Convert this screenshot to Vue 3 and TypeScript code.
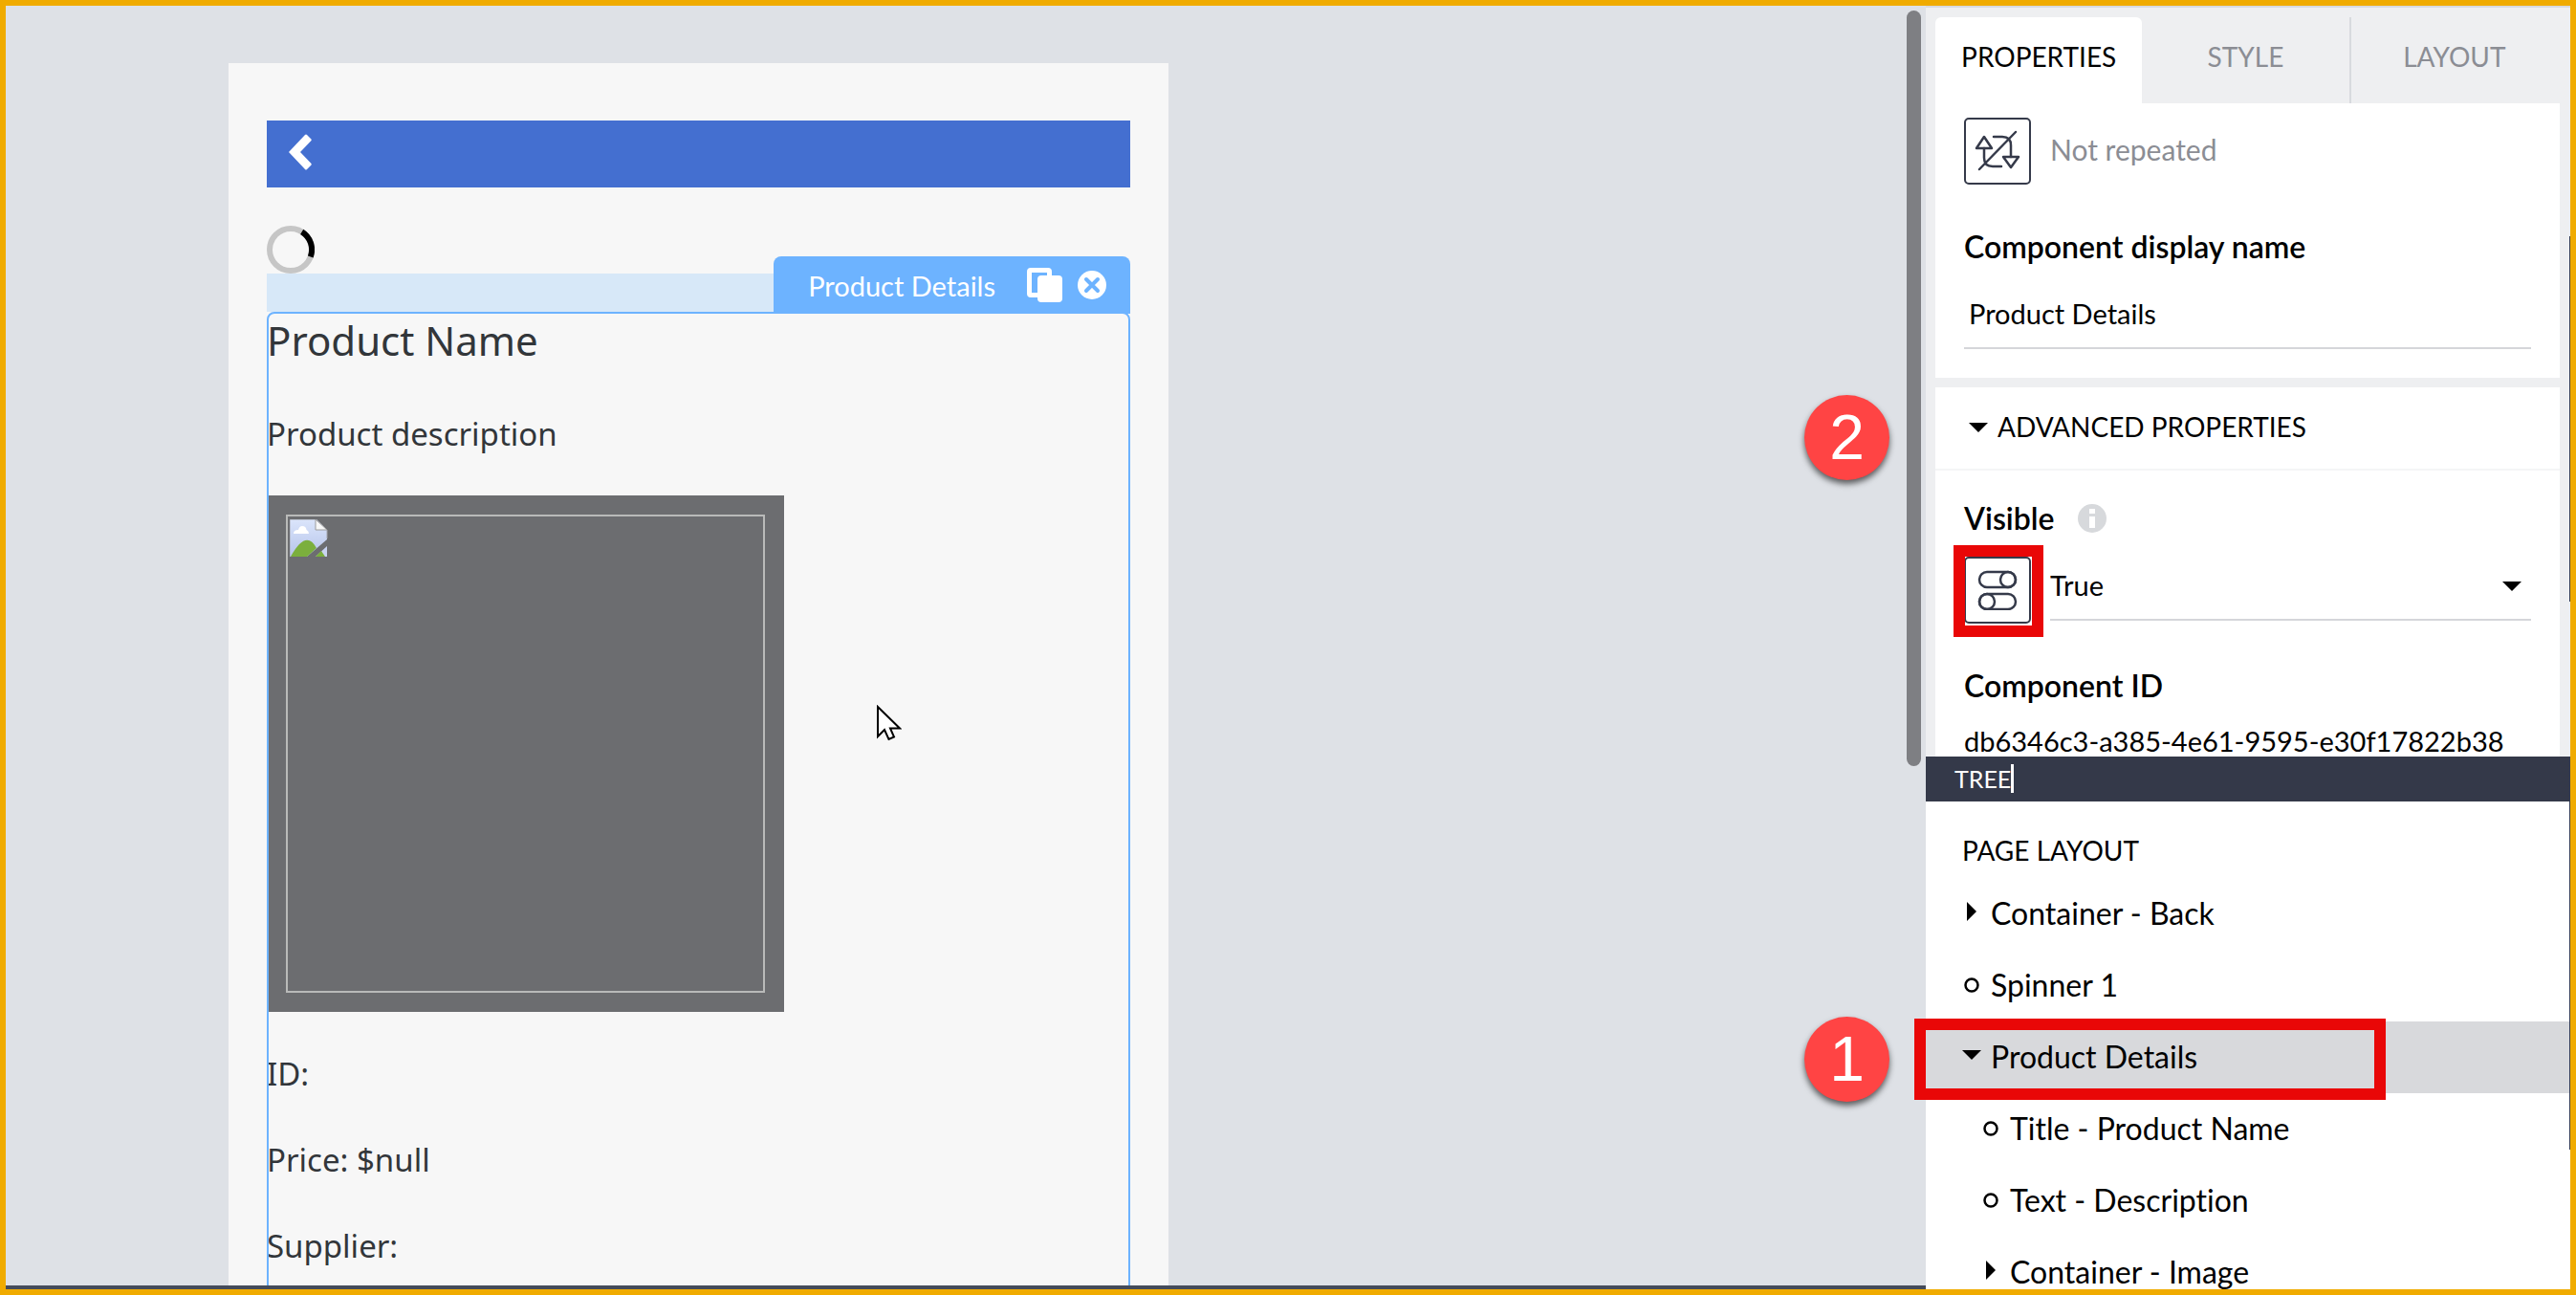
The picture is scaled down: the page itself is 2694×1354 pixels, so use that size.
<script setup lang="ts">
import { ref } from 'vue'

type NodeKind = 'closed' | 'open' | 'leaf'

interface TreeNode {
  label: string
  kind: NodeKind
  level: number
}

const tabs = ['PROPERTIES', 'STYLE', 'LAYOUT']
const activeTab = ref('PROPERTIES')
const displayName = ref('Product Details')
const visible = ref('True')
const selected = ref('Product Details')

const fields = ['ID:', 'Price: $null', 'Supplier:']

const nodes: TreeNode[] = [
  { label: 'Container - Back', kind: 'closed', level: 0 },
  { label: 'Spinner 1', kind: 'leaf', level: 0 },
  { label: 'Product Details', kind: 'open', level: 0 },
  { label: 'Title - Product Name', kind: 'leaf', level: 1 },
  { label: 'Text - Description', kind: 'leaf', level: 1 },
  { label: 'Container - Image', kind: 'closed', level: 1 },
]
</script>

<template>
  <div class="editor">
    <main class="canvas">
      <section class="phone">
        <header class="appbar">
          <button class="back" type="button" aria-label="Back">
            <svg width="24" height="38" viewBox="0 0 24 38">
              <path d="M0 19 L17 1 Q18 0 19 1 L23.500 5.500 Q24 6 23.500 7 L12 19 L23.500 31 Q24 32 23.500 32.500 L19 37 Q18 38 17 37 Z" fill="#fff" />
            </svg>
          </button>
        </header>
        <svg class="spinner" width="50" height="50" viewBox="0 0 50 50" aria-label="Loading">
          <circle cx="25" cy="25" r="22" fill="none" stroke="#c6c6c6" stroke-width="6" />
          <path d="M36.700 6.400 A22 22 0 0 1 45.800 32.500" fill="none" stroke="#000" stroke-width="6" />
        </svg>
        <div class="dropzone">
          <div class="handle">
            <span class="handle-name">Product Details</span>
            <button type="button" aria-label="Duplicate">
              <svg width="37" height="36" viewBox="0 0 37 36">
                <path d="M4 0 H22 Q26 0 26 4 V8 H21 V5 H5 V26 H11 V31 H4 Q0 31 0 27 V4 Q0 0 4 0 Z" fill="#fff" />
                <rect x="11" y="8" width="26" height="28" rx="4" fill="#fff" />
              </svg>
            </button>
            <button type="button" aria-label="Remove">
              <svg width="30" height="30" viewBox="0 0 30 30">
                <circle cx="15" cy="15" r="15" fill="#fff" />
                <path d="M9 9 L21 21 M21 9 L9 21" stroke="#6db3ff" stroke-width="4" stroke-linecap="round" />
              </svg>
            </button>
          </div>
        </div>
        <article class="selection">
          <h1>Product Name</h1>
          <p class="description">Product description</p>
          <div class="picture">
            <div class="picture-frame">
              <svg width="40" height="40" viewBox="0 0 40 40" aria-label="Missing picture">
                <defs>
                  <linearGradient id="sky" x1="0" y1="0" x2="0" y2="1">
                    <stop offset="0" stop-color="#dbe5fb" />
                    <stop offset="1" stop-color="#b6c4ea" />
                  </linearGradient>
                </defs>
                <path d="M0 0 H28 L39 11 V21 L18 39 H0 Z" fill="url(#sky)" />
                <path d="M39 28 V39 H27 Z" fill="#c9d4f1" />
                <path d="M4 15 Q4 11 9 11 Q10 7 13 7 Q17 7 17.500 11 Q20 12 20 15 Z" fill="#fff" />
                <path d="M1 39 Q17 10 28 30 L18 39 Z" fill="#7baf3d" />
                <path d="M33 33 L37 39 H27 Z" fill="#7baf3d" />
                <path d="M27 0 L39 11 H27 Z" fill="#f7f7f7" stroke="#9c9c9c" stroke-width="1" />
                <path d="M27 0 H0 V39 M39 11 V20" fill="none" stroke="#a5a8ae" stroke-width="1" />
              </svg>
            </div>
          </div>
          <p v-for="field in fields" :key="field" class="field">{{ field }}</p>
        </article>
      </section>
      <div class="scrollbar"></div>
    </main>

    <aside class="side">
      <section class="properties">
        <nav class="tabs">
          <button
            v-for="tab in tabs"
            :key="tab"
            type="button"
            :class="{ active: tab === activeTab }"
            @click="activeTab = tab"
          >{{ tab }}</button>
        </nav>

        <div class="card basic">
          <div class="repeat">
            <button class="icon-button" type="button" aria-label="Repeat with">
              <svg width="48" height="44" viewBox="0 0 48 44" fill="none" stroke="#353a4a" stroke-width="2.500" stroke-linecap="round" stroke-linejoin="round">
                <path d="M10 7 L18 19 H2 Z M38 39 L30 28 H46 Z" />
                <path d="M10 19 V29 Q10 38 19 38 H28 M20 7 H29 Q38 7 38 16 V28" />
                <path d="M43 2 L5 41" />
              </svg>
            </button>
            <span>Not repeated</span>
          </div>
          <label class="title" for="display-name">Component display name</label>
          <input id="display-name" v-model="displayName" class="text-input" type="text" />
        </div>

        <div class="card advanced">
          <button class="section-toggle" type="button">
            <svg width="20" height="10" viewBox="0 0 20 10"><path d="M0 0 H20 L10 10 Z" /></svg>
            <span>ADVANCED PROPERTIES</span>
          </button>
          <div class="advanced-body">
            <div class="visible-title">
              <label class="title" for="visible">Visible</label>
              <svg width="30" height="30" viewBox="0 0 30 30" aria-label="Info">
                <circle cx="15" cy="15" r="15" fill="#d7d9dc" />
                <path d="M12 5 H18 V10 H12 Z M12 13 H18 V25 H12 Z" fill="#fff" />
              </svg>
            </div>
            <div class="visible-row">
              <button class="icon-button" type="button" aria-label="Binding type">
                <svg width="42" height="42" viewBox="0 0 42 42" fill="none" stroke="#353a4a" stroke-width="2.500">
                  <rect x="2" y="2" width="38" height="16" rx="8" />
                  <circle cx="32" cy="10" r="8" />
                  <rect x="2" y="25" width="38" height="16" rx="8" />
                  <circle cx="10" cy="33" r="8" />
                </svg>
              </button>
              <div class="select-wrap">
                <select id="visible" v-model="visible">
                  <option>True</option>
                  <option>False</option>
                </select>
                <svg class="select-arrow" width="20" height="10" viewBox="0 0 20 10"><path d="M0 0 H20 L10 10 Z" /></svg>
              </div>
            </div>
            <div class="title">Component ID</div>
            <div class="component-id">db6346c3-a385-4e61-9595-e30f17822b38</div>
          </div>
        </div>
      </section>

      <h2 class="tree-head">TREE<span class="caret"></span></h2>

      <section class="tree">
        <h3>PAGE LAYOUT</h3>
        <ul>
          <li v-for="node in nodes" :key="node.label">
            <button
              type="button"
              :class="['node', 'level-' + node.level, { selected: node.label === selected }]"
              @click="selected = node.label"
            >
              <svg v-if="node.kind === 'closed'" width="20" height="20" viewBox="0 0 20 20"><path d="M5 0 L15 10 L5 20 Z" /></svg>
              <svg v-else-if="node.kind === 'open'" width="20" height="20" viewBox="0 0 20 20"><path d="M0 5 H20 L10 15 Z" /></svg>
              <svg v-else width="20" height="20" viewBox="0 0 20 20"><circle cx="10" cy="12" r="6.500" fill="none" stroke="#000" stroke-width="2.500" /></svg>
              <span>{{ node.label }}</span>
            </button>
          </li>
        </ul>
      </section>
    </aside>

    <div class="edge edge-top"></div>
    <div class="edge edge-bottom"></div>
    <div class="mark mark-visible"></div>
    <div class="mark mark-node"></div>
    <div class="badge badge-two">2</div>
    <div class="badge badge-one">1</div>
    <svg class="pointer" width="26" height="38" viewBox="0 0 26 38">
      <path d="M1 2 V33 L8 26 L12.500 36 L18 33.500 L14 24.500 H24 Z" fill="#fff" stroke="#000" stroke-width="2" />
    </svg>
  </div>
</template>

<style>
body {
  margin: 0;
}
</style>

<style scoped>
.editor {
  position: relative;
  display: flex;
  box-sizing: border-box;
  height: 100vh;
  overflow: hidden;
  border: 6px solid #f0ab00;
  color: #000;
  font-family: Lato, "Open Sans", sans-serif;
  font-size: 29px;
  font-variant-ligatures: none;
}

button,
input,
select {
  margin: 0;
  padding: 0;
  border: 0;
  background: none;
  color: inherit;
  font: inherit;
}

h1,
h2,
h3,
p,
ul {
  margin: 0;
  padding: 0;
  font-weight: 400;
  list-style: none;
}

svg {
  display: block;
  flex: none;
}

.canvas {
  position: relative;
  flex: 1;
  box-sizing: border-box;
  overflow: hidden;
  padding: 60px 0 0 233px;
  border-bottom: 4px solid #444b5a;
  background: #dee1e6;
}

.phone {
  box-sizing: border-box;
  width: 983px;
  min-height: 100%;
  padding: 60px 40px 0;
  background: #f7f7f7;
}

.appbar {
  display: flex;
  align-items: center;
  height: 70px;
  padding-left: 23px;
  background: #446fd0;
}

.back {
  padding-bottom: 4px;
}

.spinner {
  margin-top: 40px;
}

.dropzone {
  position: relative;
  height: 40px;
  background: #d7e8f8;
}

.handle {
  position: absolute;
  z-index: 1;
  right: 0;
  bottom: -2px;
  display: flex;
  align-items: center;
  box-sizing: border-box;
  height: 60px;
  padding: 0 25px 0 36px;
  border-radius: 8px 8px 0 0;
  background: #6db3ff;
  color: #fff;
}

.handle-name {
  margin-right: 33px;
}

.handle button + button {
  margin-left: 16px;
}

.selection {
  position: relative;
  height: 1100px;
  padding-top: 2px;
  color: #32363a;
  font-family: "Noto Sans", "Open Sans", sans-serif;
}

.selection::after {
  position: absolute;
  inset: 0;
  border: 2px solid #6db3ff;
  border-radius: 8px;
  content: "";
  pointer-events: none;
}

.selection h1 {
  font-size: 42px;
  line-height: 56px;
}

.description,
.field {
  font-size: 33px;
  line-height: 40px;
}

.description {
  margin-top: 50px;
}

.picture {
  box-sizing: border-box;
  width: 541px;
  margin: 44px 0 45px;
  padding: 20px;
  background: #6c6d70;
}

.picture-frame {
  box-sizing: border-box;
  height: 500px;
  padding: 3px 2px;
  border: 2px solid #b9bab9;
}

.field + .field {
  margin-top: 50px;
}

.scrollbar {
  position: absolute;
  top: 5px;
  right: 5px;
  width: 15px;
  height: 790px;
  border-radius: 8px;
  background: #7e7f83;
}

.side {
  display: flex;
  flex: none;
  flex-direction: column;
  width: 674px;
  background: #fff;
}

.properties {
  flex: none;
  box-sizing: border-box;
  height: 785px;
  overflow: hidden;
  padding: 10px 11px 0 10px;
  border-top: 2px solid #d8dade;
  background: #eeeff1;
}

.tabs {
  display: flex;
  height: 90px;
}

.tabs button {
  flex: 1;
  padding-bottom: 8px;
  border-radius: 6px 6px 0 0;
  color: #8b8d94;
  font-size: 28px;
}

.tabs button + button {
  border-right: 2px solid #d8dade;
  border-radius: 0;
}

.tabs button:last-child {
  border-right-color: transparent;
}

.tabs button.active {
  background: #fff;
  color: #000;
}

.card {
  background: #fff;
}

.basic {
  padding: 15px 30px 30px;
}

.repeat {
  display: flex;
  align-items: center;
  gap: 20px;
  color: #8b8d94;
  font-size: 30px;
}

.repeat span {
  padding-bottom: 4px;
}

.icon-button {
  display: flex;
  flex: none;
  align-items: center;
  justify-content: center;
  box-sizing: border-box;
  width: 70px;
  height: 70px;
  border: 2px solid #353a4a;
  border-radius: 5px;
}

.title {
  display: block;
  font-size: 32px;
  font-weight: 600;
  line-height: 40px;
}

.basic .title {
  margin-top: 45px;
}

.text-input {
  display: block;
  box-sizing: border-box;
  width: 100%;
  height: 70px;
  margin-top: 17px;
  padding: 0 5px 4px;
  border-bottom: 2px solid #d5d6da;
}

.advanced {
  margin-top: 10px;
}

.section-toggle {
  display: flex;
  align-items: center;
  gap: 10px;
  width: 100%;
  height: 87px;
  padding: 0 35px 4px;
  border-bottom: 2px solid #f4f5f6;
  font-size: 28px;
}

.section-toggle svg {
  margin-bottom: -2px;
}

.advanced-body {
  padding: 30px;
}

.visible-title {
  display: flex;
  align-items: center;
  gap: 24px;
}

.visible-row {
  display: flex;
  gap: 20px;
  margin: 20px 0 45px;
}

.select-wrap {
  position: relative;
  flex: 1;
}

.select-wrap select {
  box-sizing: border-box;
  width: 100%;
  height: 67px;
  padding-bottom: 6px;
  border-bottom: 2px solid #d5d6da;
  appearance: none;
}

.select-arrow {
  position: absolute;
  top: 26px;
  right: 10px;
}

.component-id {
  margin-top: 18px;
  line-height: 40px;
}

.tree-head {
  display: flex;
  flex: none;
  align-items: center;
  box-sizing: border-box;
  height: 47px;
  padding: 0 30px 2px;
  background: #343949;
  color: #fff;
  font-size: 25px;
}

.caret {
  width: 3px;
  height: 30px;
  background: #fff;
}

.tree {
  flex: 1;
  overflow: hidden;
}

.tree h3 {
  padding: 35px 38px 13px;
  font-size: 28px;
  line-height: 32px;
}

.node {
  display: flex;
  align-items: center;
  gap: 10px;
  box-sizing: border-box;
  width: 100%;
  height: 75px;
  padding: 0 38px 2px;
  font-size: 32px;
}

.node svg {
  margin-bottom: 4px;
}

.node.level-1 {
  padding-left: 58px;
}

.node.selected {
  background: #d8d9dc;
}

.edge {
  position: absolute;
  right: 0;
  width: 1px;
  background: #343949;
}

.edge-top {
  top: 241px;
  height: 382px;
}

.edge-bottom {
  top: 832px;
  height: 364px;
}

.mark {
  position: absolute;
  box-sizing: border-box;
  border: 12px solid #e90707;
}

.mark-visible {
  top: 564px;
  right: 551px;
  width: 94px;
  height: 96px;
}

.mark-node {
  top: 1059px;
  right: 193px;
  width: 493px;
  height: 85px;
}

.badge {
  position: absolute;
  right: 712px;
  width: 89px;
  height: 89px;
  border-radius: 50%;
  background: #ff4444;
  box-shadow: 0 4px 6px rgba(0, 0, 0, 0.6);
  color: #fff;
  font-family: "Liberation Sans", sans-serif;
  font-size: 66px;
  line-height: 89px;
  text-align: center;
}

.badge-two {
  top: 407px;
}

.badge-one {
  top: 1057px;
}

.pointer {
  position: absolute;
  top: 731px;
  left: 911px;
}
</style>
